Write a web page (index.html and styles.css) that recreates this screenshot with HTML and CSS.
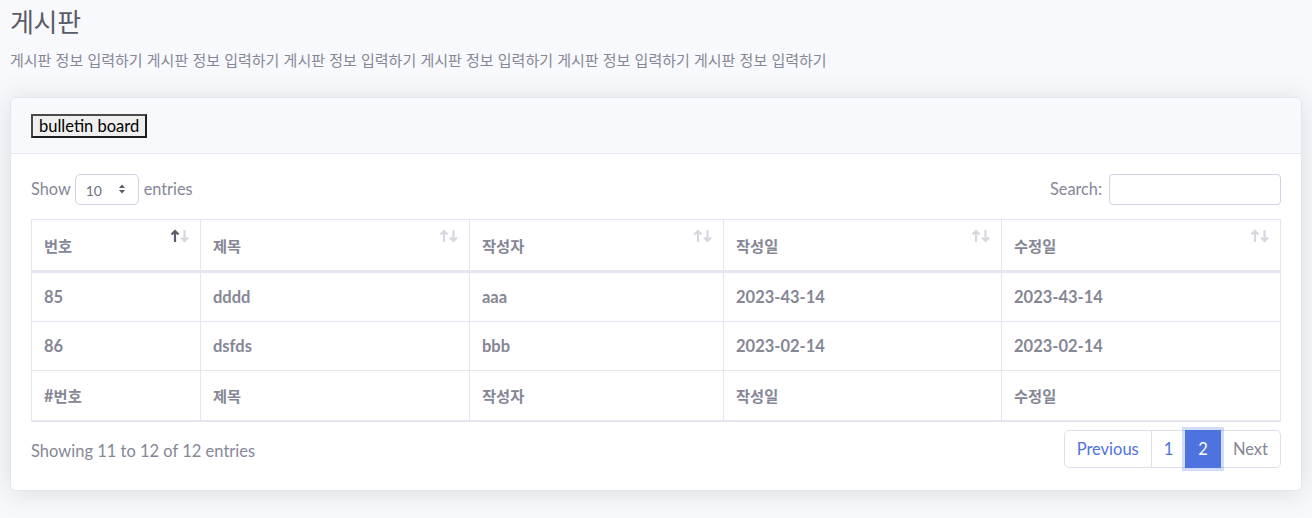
FILE: index.html
```html
<!DOCTYPE html>
<html lang="ko">
<head>
<meta charset="utf-8">
<title>게시판</title>
<link rel="stylesheet" href="styles.css">
</head>
<body>
<div class="page">
  <h1 class="page-title">게시판</h1>
  <p class="page-desc">게시판 정보 입력하기 게시판 정보 입력하기 게시판 정보 입력하기 게시판 정보 입력하기 게시판 정보 입력하기 게시판 정보 입력하기</p>

  <div class="card">
    <div class="card-header">
      <button class="bb-btn" type="button">bulletin board</button>
    </div>
    <div class="card-body">
      <div class="dt-top">
        <label class="dt-length">Show
          <span class="select-wrap">
            <select class="dt-select"><option>10</option><option>25</option><option>50</option><option>100</option></select>
            <svg class="select-arrows" width="8" height="12" viewBox="0 0 8 12"><path d="M4 1.5 L7 5 H1 Z M4 10.5 L7 7 H1 Z" fill="#5a5c69"/></svg>
          </span>
          entries</label>
        <label class="dt-search">Search:<input class="dt-input" type="search"></label>
      </div>

      <table class="dt-table">
        <colgroup>
          <col style="width:169px"><col style="width:269px"><col style="width:254px"><col style="width:278px"><col style="width:279px">
        </colgroup>
        <thead>
          <tr>
            <th><span class="ko">번호</span><svg class="sort" width="20" height="14" viewBox="0 0 20 14"><path class="up on" d="M5 13 V2 M1.5 5.5 L5 2 L8.5 5.5"/><path class="down" d="M14.5 1 V12 M11 8.5 L14.5 12 L18 8.5"/></svg></th>
            <th><span class="ko">제목</span><svg class="sort" width="20" height="14" viewBox="0 0 20 14"><path class="up" d="M5 13 V2 M1.5 5.5 L5 2 L8.5 5.5"/><path class="down" d="M14.5 1 V12 M11 8.5 L14.5 12 L18 8.5"/></svg></th>
            <th><span class="ko">작성자</span><svg class="sort" width="20" height="14" viewBox="0 0 20 14"><path class="up" d="M5 13 V2 M1.5 5.5 L5 2 L8.5 5.5"/><path class="down" d="M14.5 1 V12 M11 8.5 L14.5 12 L18 8.5"/></svg></th>
            <th><span class="ko">작성일</span><svg class="sort" width="20" height="14" viewBox="0 0 20 14"><path class="up" d="M5 13 V2 M1.5 5.5 L5 2 L8.5 5.5"/><path class="down" d="M14.5 1 V12 M11 8.5 L14.5 12 L18 8.5"/></svg></th>
            <th><span class="ko">수정일</span><svg class="sort" width="20" height="14" viewBox="0 0 20 14"><path class="up" d="M5 13 V2 M1.5 5.5 L5 2 L8.5 5.5"/><path class="down" d="M14.5 1 V12 M11 8.5 L14.5 12 L18 8.5"/></svg></th>
          </tr>
        </thead>
        <tbody>
          <tr><td>85</td><td>dddd</td><td>aaa</td><td>2023-43-14</td><td>2023-43-14</td></tr>
          <tr><td>86</td><td>dsfds</td><td>bbb</td><td>2023-02-14</td><td>2023-02-14</td></tr>
        </tbody>
        <tfoot>
          <tr><th>#<span class="ko">번호</span></th><th><span class="ko">제목</span></th><th><span class="ko">작성자</span></th><th><span class="ko">작성일</span></th><th><span class="ko">수정일</span></th></tr>
        </tfoot>
      </table>

      <div class="dt-bottom">
        <div class="dt-info">Showing 11 to 12 of 12 entries</div>
        <ul class="pagination">
          <li class="page-item"><a class="page-link first">Previous</a></li>
          <li class="page-item"><a class="page-link">1</a></li>
          <li class="page-item active"><a class="page-link">2</a></li>
          <li class="page-item disabled"><a class="page-link last">Next</a></li>
        </ul>
      </div>
    </div>
  </div>
</div>
</body>
</html>
```
FILE: styles.css
```css
* { box-sizing: border-box; }
html, body { margin: 0; padding: 0; }
body {
  background: #f8f9fc;
  font-family: "Lato", "Noto Sans CJK KR", sans-serif;
  font-size: 16.5px;
  color: #858796;
  line-height: 1.5;
}
.page { padding: 0 10px 28px 10px; }
.ko { font-family: "Noto Sans CJK KR", sans-serif; font-size: 15.3px; }
.page-title {
  margin: 0 0 6px 0;
  font-family: "Noto Sans CJK KR", sans-serif;
  font-weight: 400;
  font-size: 26px;
  line-height: 42px;
  color: #5a5c69;
  letter-spacing: -0.3px;
}
.page-desc {
  margin: 0 0 25px 0;
  font-family: "Noto Sans CJK KR", sans-serif;
  font-size: 15px;
  line-height: 24px;
  color: #858796;
}
.card {
  background: #fff;
  border: 1px solid #e3e6f0;
  border-radius: 5px;
  box-shadow: 0 2px 28px 0 rgba(58, 59, 69, 0.15);
}
.card-header {
  background: #f8f9fc;
  border-bottom: 1px solid #e3e6f0;
  border-radius: 5px 5px 0 0;
  padding: 16px 20px 15px;
  display: flex;
}
.bb-btn {
  height: 24px;
  padding: 0 6px;
  font-family: "Lato", sans-serif;
  font-size: 16.5px;
  color: #000;
  background: #efefef;
  border: 2px solid;
  border-color: #4a4a4a #1e1e1e #1e1e1e #4a4a4a;
  border-radius: 0;
  line-height: 18px;
}
.card-body { padding: 20px 20px 22px 20px; }
.dt-top {
  display: flex;
  justify-content: space-between;
  align-items: center;
  height: 30px;
  margin-bottom: 15px;
}
.dt-length, .dt-search { display: flex; align-items: center; font-size: 16.3px; }
.select-wrap { position: relative; display: inline-block; margin: 0 5px 0 4px; }
.dt-select {
  -webkit-appearance: none;
  appearance: none;
  width: 64px;
  height: 31px;
  padding: 2px 10px 0;
  font-family: "Lato", sans-serif;
  font-size: 14px;
  color: #6e707e;
  background: #fff;
  border: 1px solid #d1d3e2;
  border-radius: 5px;
}
.select-arrows { position: absolute; left: 43px; top: 9px; pointer-events: none; }
.dt-input {
  width: 172px;
  height: 31px;
  margin-left: 7px;
  border: 1px solid #d1d3e2;
  border-radius: 4px;
  background: #fff;
}
.dt-table {
  width: 100%;
  border-collapse: collapse;
  table-layout: fixed;
  border: 1px solid #e3e6f0;
  border-bottom-width: 2px;
  color: #858796;
}
.dt-table th, .dt-table td {
  border: 1px solid #e3e6f0;
  padding: 12px 12px;
  text-align: left;
  font-weight: 700;
  line-height: 24px;
  height: 49px;
  vertical-align: middle;
}
.dt-table thead th {
  border-bottom: 3px solid #e3e6f0;
  position: relative;
  height: 52px;
}
.dt-table tfoot th { border-top: 1px solid #e3e6f0; }
.sort {
  position: absolute;
  right: 10px;
  top: 9px;
  fill: none;
  stroke-width: 2.2;
  stroke-linecap: butt;
  stroke-linejoin: miter;
}
.sort path { stroke: #d6d7df; }
.sort path.on { stroke: #5a5c69; }
.dt-bottom {
  display: flex;
  justify-content: space-between;
  align-items: center;
  margin-top: 8px;
}
.dt-info { font-size: 16.5px; padding-top: 4px; }
.pagination {
  display: flex;
  list-style: none;
  margin: 0;
  padding: 0;
}
.page-link {
  display: block;
  padding: 8px 12px;
  line-height: 20px;
  font-size: 16.5px;
  color: #4e73df;
  background: #fff;
  border: 1px solid #dddfeb;
  margin-left: -1px;
}
.page-link.first { border-radius: 5px 0 0 5px; margin-left: 0; }
.page-link.last { border-radius: 0 5px 5px 0; }
.page-item.active .page-link {
  background: #4e73df;
  border-color: #4e73df;
  color: #fff;
  box-shadow: 0 0 0 3px rgba(78, 115, 223, 0.25);
  position: relative;
  z-index: 1;
}
.page-item.disabled .page-link { color: #858796; }
```
